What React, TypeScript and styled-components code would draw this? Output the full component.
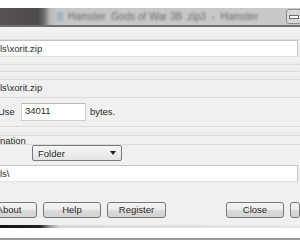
import React from 'react';
import styled, { createGlobalStyle } from 'styled-components';

const GlobalStyle = createGlobalStyle`
    body {
        margin : 0;
        background : #ffffff;
        font-family : "Liberation Sans", "DejaVu Sans", sans-serif;
    }
`;

const App: React.FC = () => {
    return (
        <Screen>
            <GlobalStyle />
            <TopGap />
            <TitleBar>
                <TitleIcon />
                <TitleText>Hamster&nbsp;&nbsp;Gods of War 3B .zip3&nbsp;&nbsp;-&nbsp;&nbsp;Hamster</TitleText>
                <MinButton><MinDash /></MinButton>
            </TitleBar>
            <Dialog>
                <Stripe height={13} />
                <PathField>ls\xorit.zip</PathField>
                <Stripe height={8} />
                <Stripe height={7} />
                <Stripe height={8} />
                <LabelRow height={18}>ls\xorit.zip</LabelRow>
                <SizeRow>
                    <Label>Use</Label>
                    <NumberBox>34011</NumberBox>
                    <Label>bytes.</Label>
                </SizeRow>
                <Stripe height={9} />
                <LabelRow height={9}>nation</LabelRow>
                <SelectRow>
                    <SelectBox>
                        <span>Folder</span>
                        <Arrow />
                    </SelectBox>
                </SelectRow>
                <PathField>ls\</PathField>
                <ButtonRow>
                    <Button width={56} offset={-19}>About</Button>
                    <Button width={58}>Help</Button>
                    <Button width={59}>Register</Button>
                    <Spacer />
                    <Button width={58}>Close</Button>
                    <Button width={10} />
                </ButtonRow>
            </Dialog>
            <BottomEdge />
            <BottomBand />
        </Screen>
    );
};

export default App;

const Screen = styled.div`
    width : 300px;
    height : 240px;
    overflow : hidden;
    display : flex;
    flex-direction : column;
    background : #ffffff;
`;

const TopGap = styled.div`
    height : 8px;
    background : #ffffff;
`;

const TitleBar = styled.div`
    height : 17px;
    display : flex;
    align-items : center;
    background : linear-gradient(to right, #575353 0px, #4f4b4b 38px, #6e6b6b 44px, #b8b8b8 50px, #c6c6c6 58px, #c9c9c9 100%);
    border-bottom : 2px solid #6f6f6f;
`;

const TitleIcon = styled.div`
    width : 6px;
    height : 9px;
    margin-left : 57px;
    background : #9fb1c0;
    filter : blur(1px);
`;

const TitleText = styled.div`
    margin-left : 5px;
    font-size : 10px;
    color : #6c6c6c;
    white-space : nowrap;
    filter : blur(0.9px);
    flex : 1;
    overflow : hidden;
`;

const MinButton = styled.div`
    width : 14px;
    height : 13px;
    margin-right : -2px;
    border : 1px solid #8f8f8f;
    border-radius : 3px;
    background : #d8d8d8;
    display : flex;
    align-items : center;
    justify-content : center;
`;

const MinDash = styled.div`
    width : 8px;
    height : 2px;
    background : #ffffff;
    border : 1px solid #707070;
`;

const Dialog = styled.div`
    flex : 1;
    display : flex;
    flex-direction : column;
    background : #f0f0f0;
    font-size : 9.5px;
    color : #2a2a2a;
`;

const Stripe = styled.div<{ height: number }>`
    height : ${p => p.height}px;
    flex-shrink : 0;
    box-sizing : border-box;
    background : linear-gradient(#f3f3f3, #ececec);
    border-bottom : 1px solid #dcdcdc;
`;

const PathField = styled.div`
    height : 17px;
    flex-shrink : 0;
    box-sizing : border-box;
    background : #ffffff;
    border-top : 1px solid #c4c4c4;
    border-bottom : 1px solid #e2e2e2;
    border-right : 1px solid #c4c4c4;
    margin-right : 2px;
    line-height : 15px;
`;

const LabelRow = styled.div<{ height: number }>`
    height : ${p => p.height}px;
    flex-shrink : 0;
    box-sizing : border-box;
    line-height : ${p => Math.min(p.height, 15)}px;
    border-bottom : 1px solid #dcdcdc;
    overflow : visible;
`;

const SizeRow = styled.div`
    height : 29px;
    flex-shrink : 0;
    box-sizing : border-box;
    display : flex;
    align-items : flex-start;
    padding-top : 5px;
    border-bottom : 1px solid #dcdcdc;
`;

const Label = styled.div`
    line-height : 18px;
    margin-left : -2px;
    margin-right : 6px;
`;

const NumberBox = styled.div`
    width : 65px;
    height : 18px;
    box-sizing : border-box;
    background : #ffffff;
    border : 1px solid #d0d0d0;
    border-top-color : #b8b8b8;
    line-height : 14px;
    padding-left : 3px;
    margin-right : 6px;
`;

const SelectRow = styled.div`
    height : 20px;
    flex-shrink : 0;
    padding-left : 32px;
`;

const SelectBox = styled.div`
    width : 90px;
    height : 16px;
    box-sizing : border-box;
    border : 1px solid #7a7a7a;
    border-radius : 2px;
    background : linear-gradient(#f6f6f6, #e4e4e4);
    display : flex;
    align-items : center;
    justify-content : space-between;
    padding : 0 5px 0 5px;
`;

const Arrow = styled.div`
    width : 0;
    height : 0;
    border-left : 3px solid transparent;
    border-right : 3px solid transparent;
    border-top : 4px solid #222222;
`;

const ButtonRow = styled.div`
    height : 43px;
    flex-shrink : 0;
    box-sizing : border-box;
    display : flex;
    gap : 6px;
    padding-top : 20px;
`;

const Button = styled.div<{ width: number; offset?: number }>`
    width : ${p => p.width}px;
    height : 16px;
    margin-left : ${p => p.offset ?? 0}px;
    box-sizing : border-box;
    border : 1px solid #777777;
    border-radius : 3px;
    background : linear-gradient(#f4f4f4 0%, #ebebeb 50%, #dcdcdc 52%, #d2d2d2 100%);
    line-height : 14px;
    text-align : center;
    flex-shrink : 0;
`;

const Spacer = styled.div`
    flex : 1;
`;

const BottomEdge = styled.div`
    height : 3px;
    flex-shrink : 0;
    background : linear-gradient(to right, #111111 0px, #222222 40px, #999999 50px, #d8d8d8 60px, #e8e8e8 100%);
`;

const BottomBand = styled.div`
    flex : 1;
    background : #ffffff;
    border-bottom : 2px solid #9a9a9a;
`;
